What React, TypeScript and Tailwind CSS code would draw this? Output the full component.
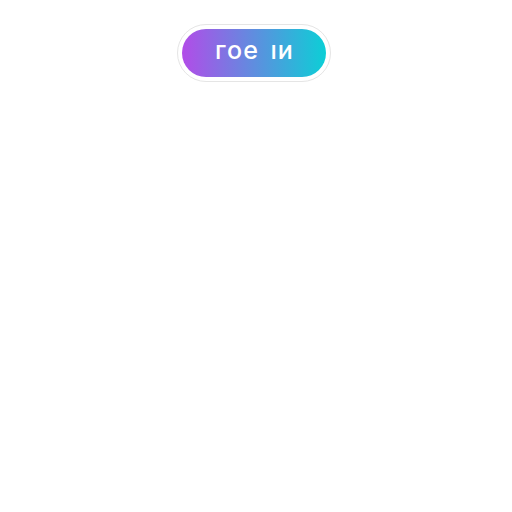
export default function App() {
  return (
    <div className="w-[512px] h-[512px] bg-white pt-[24px] pl-[177px]">
      <div className="w-[154px] h-[58px] rounded-full border border-[#e5e5e5] bg-white p-[4px]">
        <button className="w-full h-full rounded-full bg-[linear-gradient(to_right,#b24ce8,#0ccfd6)] flex items-center justify-center text-white text-[25px] font-medium tracking-[1px] [word-spacing:4px] leading-none pb-[5px] pl-[1px]" style={{ fontFamily: "Inter, 'Noto Sans', sans-serif" }}>
          гoe ıи
        </button>
      </div>
    </div>
  );
}
